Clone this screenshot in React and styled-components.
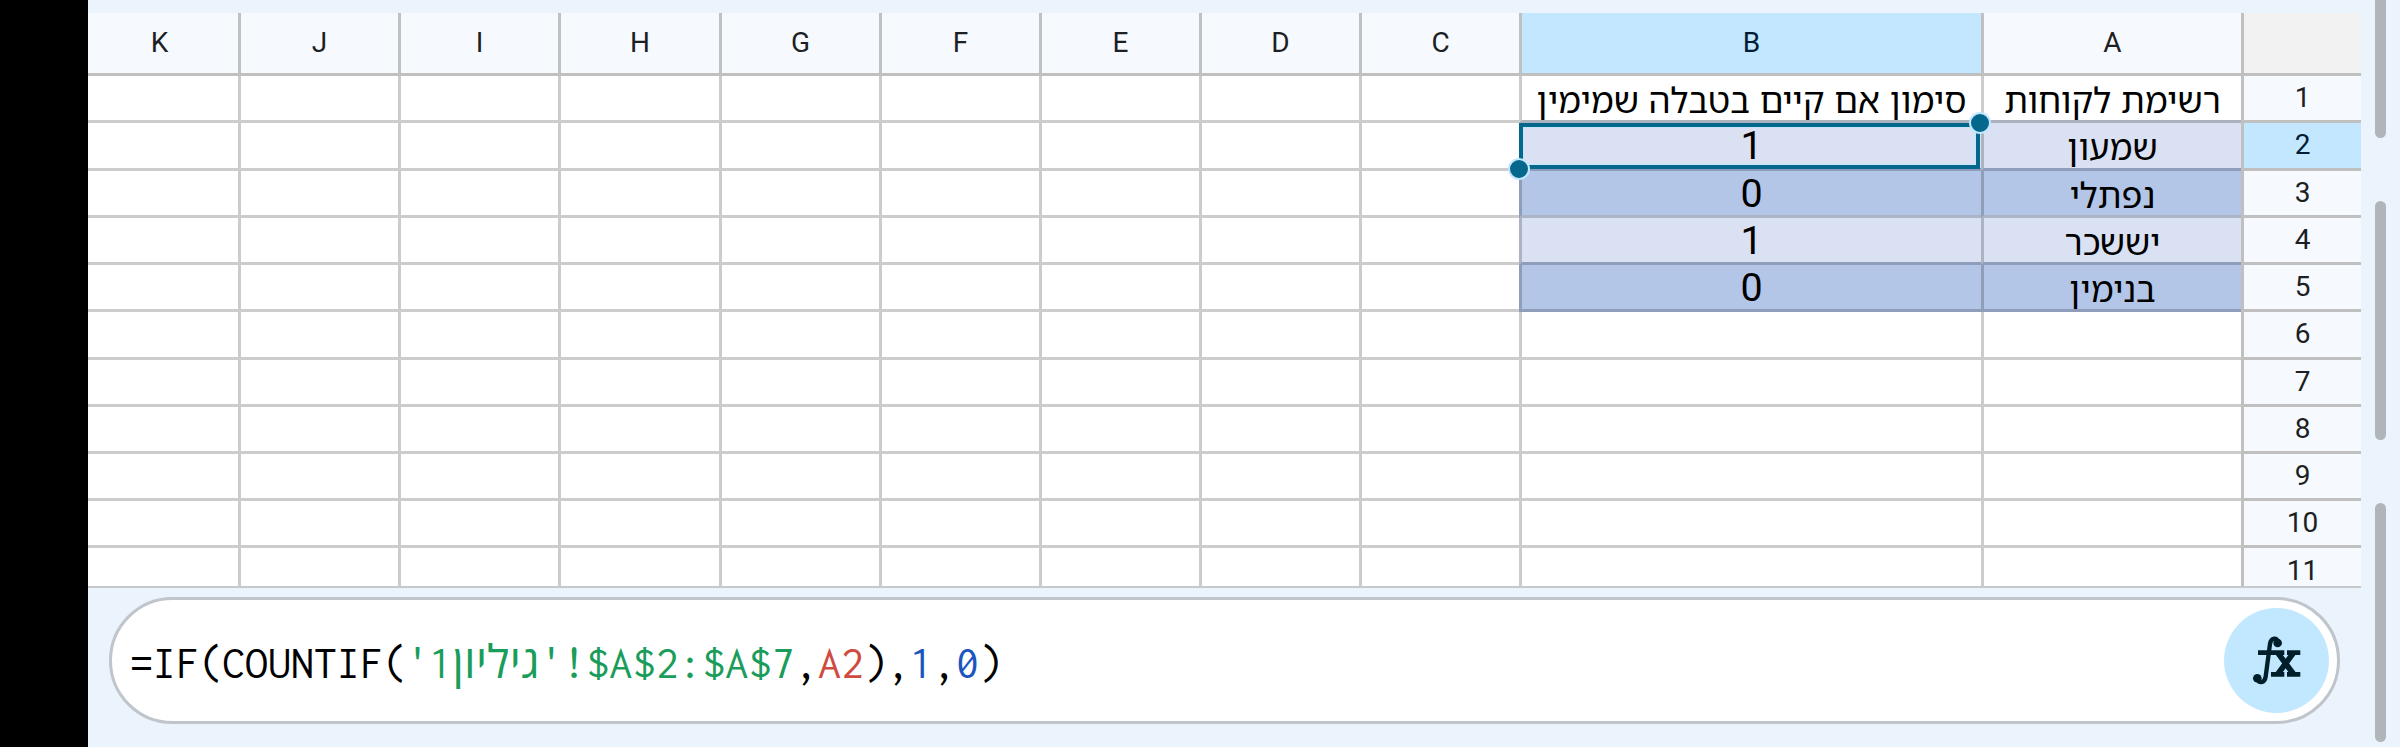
import React from 'react'
import styled, { createGlobalStyle } from 'styled-components'

const columns = ['A', 'B', 'C', 'D', 'E', 'F', 'G', 'H', 'I', 'J', 'K']

const rows = [
  { id: 1, values: ['רשימת לקוחות', 'סימון אם קיים בטבלה שמימין'], line: '#acb2bd' },
  { id: 2, values: ['שמעון', '1'], fill: '#d9e1f2', line: '#8e9dba', side: '#adb4c1' },
  { id: 3, values: ['נפתלי', '0'], fill: '#b4c6e7', line: '#acb5c6', side: '#909eb9' },
  { id: 4, values: ['יששכר', '1'], fill: '#d9e1f2', line: '#8e9dba', side: '#adb4c1' },
  { id: 5, values: ['בנימין', '0'], fill: '#b4c6e7', line: '#8e9dba', side: '#909eb9' },
  { id: 6, values: [] },
  { id: 7, values: [] },
  { id: 8, values: [] },
  { id: 9, values: [] },
  { id: 10, values: [] },
  { id: 11, values: [] }
]

const selectedRow = 2
const selectedColumn = 'B'

const FunctionIcon = () => (
  <IconSvg viewBox="0 0 160 160" fill="none" stroke="currentColor">
    <path d="M84 26C82 8 63 10 60 30L47 128C44 148 25 150 22 134" strokeWidth="13" />
    <circle cx="83" cy="27" r="13" fill="currentColor" stroke="none" />
    <circle cx="22" cy="133" r="13" fill="currentColor" stroke="none" />
    <path d="M24 56H103M111 56H151M63 121H103M111 121H151" strokeWidth="14" />
    <path d="M83 56L131 121M131 56L83 121" strokeWidth="17" />
  </IconSvg>
)

const Sheet = () => (
  <SheetGrid>
    <Corner />
    {columns.map((name) => (
      <ColumnHeader key={name} $active={name === selectedColumn}>{name}</ColumnHeader>
    ))}
    {rows.map((row) => (
      <React.Fragment key={row.id}>
        <RowHeader $active={row.id === selectedRow}>{row.id}</RowHeader>
        {columns.map((name, i) => {
          const value = row.values[i]
          const selected = row.id === selectedRow && name === selectedColumn
          return (
            <Cell
              key={name}
              $fill={value && row.fill}
              $line={value && row.line}
              $side={value && row.side}
              $numeric={value === '0' || value === '1'}>
              {value}
              {selected && (
                <Selection>
                  <Handle $corner="start" />
                  <Handle $corner="end" />
                </Selection>
              )}
            </Cell>
          )
        })}
      </React.Fragment>
    ))}
  </SheetGrid>
)

const FormulaBar = () => (
  <Bar>
    <Formula>
      =IF(COUNTIF(
      <Token $color="#1a9c5b" $spacing="0.2px">&apos;גיליון1&apos;!$A$2:$A$7</Token>
      ,
      <Token $color="#cf4a3f">A2</Token>
      ),
      <Token $color="#1b56c0">1</Token>
      ,
      <Token $color="#1b56c0">0</Token>
      )
    </Formula>
    <FunctionButton aria-label="functions">
      <FunctionIcon />
    </FunctionButton>
  </Bar>
)

export default function App() {
  return (
    <>
      <GlobalStyle />
      <Screen>
        <Main>
          <Sheet />
          <FormulaBar />
        </Main>
        <EdgeColumn>
          <EdgeBar $first />
          <EdgeBar />
          <EdgeBar />
        </EdgeColumn>
      </Screen>
    </>
  )
}

const GlobalStyle = createGlobalStyle`
  * {
    box-sizing: border-box;
  }

  body {
    margin: 0;
    background: #ebf3fc;
    overflow: hidden;
  }
`

const Screen = styled.div`
  display: flex;
  width: 2400px;
  height: 747px;
  border-left: 88px solid #000;
  background: #ebf3fc;
`

const Main = styled.main`
  display: flex;
  flex-direction: column;
  width: 2273px;
  padding-top: 13px;
`

const SheetGrid = styled.section`
  display: grid;
  direction: rtl;
  grid-template-columns: 120px 260px 462px repeat(5, 160px) 161px 160px 160px 150px;
  grid-template-rows: 63px 47px 48px 47px 47px 47px 48px 47px 47px 47px 47px 38px;
  height: 575px;
  background: #fff;
  border-bottom: 2px solid #c5c9cc;
`

const Corner = styled.div`
  background: #f2f2f2;
  border-left: 3px solid #c0c0c0;
  border-bottom: 3px solid #c0c0c0;
`

const HeaderBase = styled.div`
  font-family: Roboto, sans-serif;
  font-size: 28px;
  text-align: center;
  color: ${(props) => (props.$active ? '#001d35' : '#1c1f23')};
  background: ${(props) => (props.$active ? '#c2e7ff' : '#f6f9fe')};
  border-left: 3px solid #c0c0c0;
  border-bottom: 3px solid #c0c0c0;
`

const ColumnHeader = styled(HeaderBase)`
  line-height: 59px;

  &:nth-child(12) {
    border-left: none;
    padding-right: 7px;
  }
`

const RowHeader = styled(HeaderBase)`
  line-height: 43px;
  overflow: hidden;

  &:nth-last-child(12) {
    border-bottom: none;
    line-height: 45px;
  }
`

const Cell = styled.div`
  position: relative;
  font-family: ${(props) => (props.$numeric ? 'Roboto' : '"Noto Sans Hebrew", "Open Sans"')}, sans-serif;
  font-size: ${(props) => (props.$numeric ? '39.5px' : '34.6px')};
  line-height: ${(props) => (props.$numeric ? '46px' : '47px')};
  word-spacing: 0.5px;
  text-align: center;
  white-space: nowrap;
  color: #000;
  background: ${(props) => props.$fill || '#fff'};
  border-left: 3px solid ${(props) => props.$side || '#ccc'};
  border-bottom: 3px solid ${(props) => props.$line || '#ccc'};

  &:nth-child(12n) {
    border-left: none;
  }

  &:nth-last-child(-n + 11) {
    border-bottom: none;
  }
`

const Selection = styled.div`
  position: absolute;
  z-index: 1;
  top: 0;
  left: -3px;
  width: 461px;
  height: 46px;
  border: 4px solid #04678b;
  box-shadow: inset 0 0 0 1px #c2e7ff;
`

const Handle = styled.span`
  position: absolute;
  width: 22px;
  height: 22px;
  border: 2px solid #c2e7ff;
  border-radius: 50%;
  background: #04678b;
  ${(props) => (props.$corner === 'start' ? 'top: -15px; right: -15px;' : 'bottom: -15px; left: -15px;')}
`

const Bar = styled.section`
  display: flex;
  align-items: center;
  justify-content: space-between;
  width: 2231px;
  height: 127px;
  margin: 9px 0 0 21px;
  padding: 0 8px 0 18px;
  border: 3px solid #bfc5ca;
  border-radius: 64px;
  background: #fff;
`

const Formula = styled.div`
  display: flex;
  padding-top: 4px;
  font-family: Inconsolata, "Open Sans", monospace;
  font-size: 46px;
  line-height: 60px;
  white-space: pre;
  color: #000;
`

const Token = styled.span`
  color: ${(props) => props.$color};
  letter-spacing: ${(props) => props.$spacing || 'normal'};
`

const FunctionButton = styled.button`
  display: flex;
  align-items: center;
  justify-content: center;
  width: 105px;
  height: 105px;
  padding: 0;
  border: none;
  border-radius: 50%;
  color: #001f2a;
  background: #c2e8ff;
`

const IconSvg = styled.svg`
  width: 53.3px;
  height: 53.3px;
`

const EdgeColumn = styled.aside`
  display: flex;
  flex-direction: column;
  gap: 63px;
  padding-left: 14px;
`

const EdgeBar = styled.div`
  width: 11px;
  height: ${(props) => (props.$first ? '138px' : '239px')};
  border-radius: ${(props) => (props.$first ? '0 0 6px 6px' : '6px')};
  background: #b0b5b9;
`
